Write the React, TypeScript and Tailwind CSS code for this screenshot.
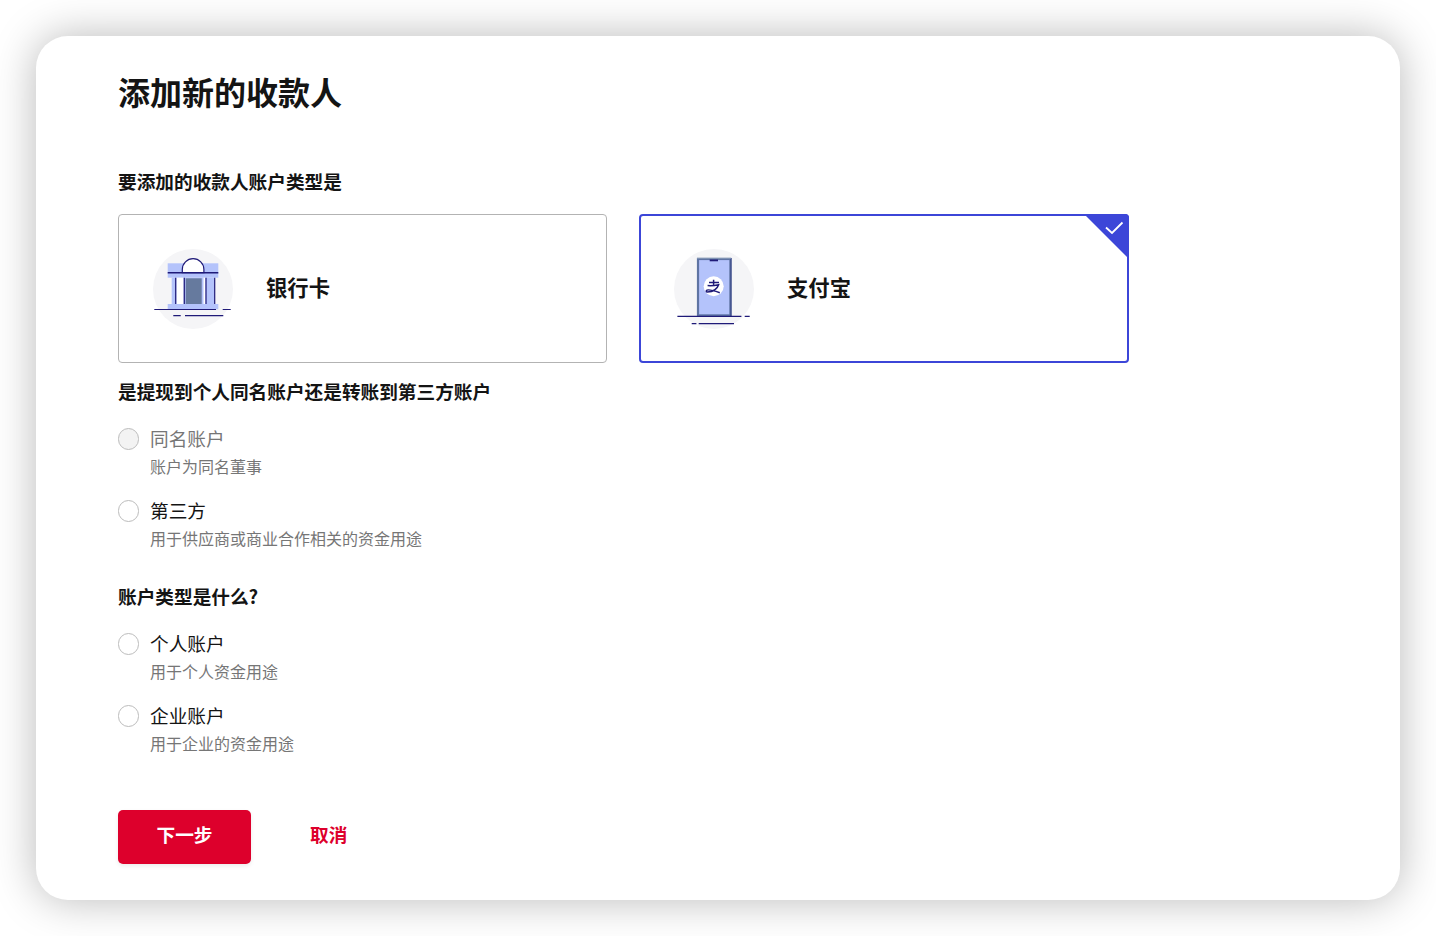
import React from "react";

const FONT = "font-['Noto_Sans_CJK_SC','Noto_Sans',sans-serif]";

function BankIcon() {
  return (
    <svg width="80" height="80" viewBox="0 0 80 80" className="shrink-0">
      <circle cx="40" cy="40" r="40" fill="#f5f5f7" />
      <rect x="14.7" y="14.3" width="50.6" height="14.4" fill="#b4c3fb" />
      <rect x="18.7" y="28.7" width="42.6" height="27" fill="#b4c3fb" />
      <rect x="23.5" y="28.7" width="7" height="27" fill="#ffffff" />
      <rect x="50.5" y="28.7" width="2" height="27" fill="#ffffff" />
      <rect x="32.7" y="29.3" width="16" height="26" fill="#667a9e" />
      <rect x="14.7" y="55" width="50.6" height="5.3" fill="#b4c3fb" />
      <path d="M29.3 23.7v-3.2a10.8 10.8 0 0 1 21.6 0v3.2z" fill="#ffffff" stroke="#1f1a78" strokeWidth="1.2" />
      <path d="M14.7 23.7h50.6" stroke="#1f1a78" strokeWidth="1.4" />
      <path d="M22.7 28.7v26.3M31.3 28.7v26.3M53 28.7v26.3M61.7 28.7v26.3" stroke="#1f1a78" strokeWidth="1.2" />
      <path d="M1.3 60.5h61.7M69.7 60.5h8M20.3 66.7h7.4M32 66.7h38.3" stroke="#1f1a78" strokeWidth="1.2" />
    </svg>
  );
}

function AlipayIcon() {
  return (
    <svg width="80" height="80" viewBox="0 0 80 80" className="shrink-0">
      <circle cx="40" cy="40" r="40" fill="#f5f5f7" />
      <rect x="24" y="10" width="32.4" height="56.4" fill="#b4c3fb" stroke="#5f74a3" strokeWidth="2.2" />
      <path d="M57 9v58.5" stroke="#2f3a80" strokeWidth="1" />
      <path d="M23 9.2h34" stroke="#8fa0bb" strokeWidth="1" />
      <path d="M35.7 11.4h8.3" stroke="#1f1a78" strokeWidth="1.8" />
      <circle cx="39.7" cy="37.3" r="10" fill="#ffffff" />
      <path
        d="M35 33.6h10M39.6 30.8v5M33.6 36.6c3.6.2 8.1-.2 11-.9-1.3 4-5.7 7-11.4 7.4-1 0-1.4-1.4-.2-2 2.2-.9 7 .6 12.8 2.6"
        fill="none"
        stroke="#1f1a78"
        strokeWidth="1.5"
      />
      <path d="M3.4 67.4h64M70.7 67.4h5M17.7 74.6h4.7M24.7 74.6h35.3" stroke="#1f1a78" strokeWidth="1.2" />
    </svg>
  );
}

function Radio({
  title,
  sub,
  disabled,
  className,
}: {
  title: string;
  sub: string;
  disabled?: boolean;
  className: string;
}) {
  return (
    <div className={`flex gap-[11px] ${className}`}>
      <span
        className={`mt-[3px] h-[22px] w-[21px] rounded-full border border-[#bcbcbc] ${
          disabled ? "bg-[#f3f3f3]" : "bg-white"
        }`}
      />
      <div>
        <div className={`pb-[2px] text-[18.67px] leading-[26px] ${disabled ? "text-[#767676]" : "text-[#141414]"}`}>{title}</div>
        <div className="mt-[3px] pb-[2px] text-[16px] leading-[20px] text-[#767676]">{sub}</div>
      </div>
    </div>
  );
}

function Label({ children, className }: { children: React.ReactNode; className: string }) {
  return <div className={`pb-[2px] text-[18.67px] font-semibold leading-[26px] text-[#141414] ${className}`}>{children}</div>;
}

export default function App() {
  return (
    <div className={`min-h-[936px] bg-white p-[36px] ${FONT}`}>
      <div className="h-[864px] w-[1364px] rounded-[32px] bg-white pl-[82px] pt-[35px] shadow-[0_0_44px_rgba(0,0,0,0.28)]">
        <h1 className="pb-[4px] text-[32px] font-bold leading-[40px] text-[#141414]">添加新的收款人</h1>

        <Label className="mt-[53px]">要添加的收款人账户类型是</Label>

        <div className="mt-[18px] grid w-[1011px] grid-cols-[489px_490px] gap-[32px]">
          <div className="flex h-[149px] items-center gap-[33px] rounded-[4px] border border-[#b3b3b3] bg-white pl-[34px]">
            <BankIcon />
            <span className="pb-[4px] text-[21.33px] font-semibold leading-[30px] text-[#141414]">银行卡</span>
          </div>
          <div className="relative flex h-[149px] items-center gap-[33px] rounded-[4px] border-2 border-[#3c46d8] bg-white pl-[33px]">
            <AlipayIcon />
            <span className="pb-[4px] text-[21.33px] font-semibold leading-[30px] text-[#141414]">支付宝</span>
            <svg width="45" height="45" viewBox="0 0 45 45" className="absolute -right-[2px] -top-[2px] rounded-tr-[4px]">
              <path d="M0 0h45v45z" fill="#3c46d8" />
              <path d="M22 13.5l6 5.5 10.5-10.5" fill="none" stroke="#ffffff" strokeWidth="1.8" />
            </svg>
          </div>
        </div>

        <Label className="mt-[15px]">是提现到个人同名账户还是转账到第三方账户</Label>
        <Radio className="mt-[19px]" disabled title="同名账户" sub="账户为同名董事" />
        <Radio className="mt-[19px]" title="第三方" sub="用于供应商或商业合作相关的资金用途" />

        <Label className="mt-[33px]">账户类型是什么?</Label>
        <Radio className="mt-[19px]" title="个人账户" sub="用于个人资金用途" />
        <Radio className="mt-[19px]" title="企业账户" sub="用于企业的资金用途" />

        <div className="mt-[55px] flex items-center">
          <button className="h-[54px] w-[133px] rounded-[5px] bg-[#dd002c] pb-[6px] text-[18.67px] font-semibold text-white shadow-[0_2px_4px_rgba(0,0,0,0.08)]">
            下一步
          </button>
          <button className="ml-[59px] pb-[6px] text-[18.67px] font-semibold text-[#dd002c]">取消</button>
        </div>
      </div>
    </div>
  );
}
